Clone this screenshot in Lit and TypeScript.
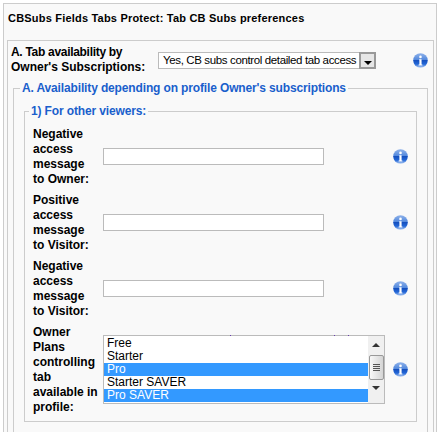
import { LitElement, html, css, svg } from 'lit';
import { customElement } from 'lit/decorators.js';

interface Row {
  label: string[];
}

const textRows: Row[] = [
  { label: ['Negative', 'access', 'message', 'to Owner:'] },
  { label: ['Positive', 'access', 'message', 'to Visitor:'] },
  { label: ['Negative', 'access', 'message', 'to Visitor:'] },
];

const plans = [
  { name: 'Free', on: false },
  { name: 'Starter', on: false },
  { name: 'Pro', on: true },
  { name: 'Starter SAVER', on: false },
  { name: 'Pro SAVER', on: true },
];

const infoIcon = svg`
  <svg class="info" width="15" height="15" viewBox="0 0 15 15">
    <defs>
      <linearGradient id="ball" x1="0" y1="0" x2="0" y2="1">
        <stop offset="0" stop-color="#8fb2ea" />
        <stop offset="0.48" stop-color="#4f86dc" />
        <stop offset="0.5" stop-color="#1550bf" />
        <stop offset="0.75" stop-color="#2468d8" />
        <stop offset="1" stop-color="#b4cdf2" />
      </linearGradient>
    </defs>
    <circle cx="7.5" cy="7.5" r="7.3" fill="url(#ball)" />
    <circle cx="7.5" cy="3.9" r="1.3" fill="#fff" />
    <path d="M6.2 6.3h2.4v5.3h.8v1H5.6v-1h.8V7.3h-.2z" fill="#fff" />
  </svg>
`;

@customElement('app-root')
export class AppRoot extends LitElement {
  static styles = css`
    :host {
      display: block;
      width: 444px;
      height: 432px;
      overflow: hidden;
      background: #fff;
      font-family: 'Liberation Sans', Arial, sans-serif;
      font-size: 12px;
      line-height: 15px;
      color: #000;
    }

    .panel {
      margin: 3px 7px 0 3px;
      height: 440px;
      box-sizing: border-box;
      border: 1px solid #ccc;
      background: #f9f9f9;
      padding: 0 2px 0 3px;
    }

    h3 {
      margin: 0;
      height: 36px;
      padding: 7px 0 0 1px;
      box-sizing: border-box;
      font-size: 11px;
      line-height: 15px;
      font-weight: bold;
      letter-spacing: 0.2px;
    }

    .box {
      border: 1px solid #ccc;
      height: 440px;
      box-sizing: border-box;
      padding: 3px 5px 0 3px;
    }

    .top-row {
      display: flex;
      align-items: center;
      height: 32px;
      margin-bottom: 5px;
    }

    .top-label {
      width: 147px;
      flex: none;
      font-weight: bold;
    }

    .tight {
      letter-spacing: -0.3px;
    }

    .fake-select {
      width: 219px;
      height: 17px;
      box-sizing: border-box;
      border: 1px solid #bbb;
      background: #fff;
      display: flex;
      align-items: center;
      justify-content: space-between;
      padding-left: 4px;
      font-size: 11.5px;
      letter-spacing: -0.37px;
      white-space: nowrap;
    }

    .drop {
      width: 17px;
      height: 17px;
      margin: -1px -1px -1px 0;
      box-sizing: border-box;
      border: 2px solid #999;
      background: #e6e6e6;
      display: flex;
      align-items: flex-end;
      justify-content: center;
      padding-bottom: 2px;
    }

    .drop i {
      border: 4px solid transparent;
      border-top-color: #000;
      border-bottom-width: 0;
    }

    .top-row .info {
      margin-left: 37px;
    }

    fieldset {
      margin: 0;
      padding: 0;
      border: 1px solid #ccc;
      min-width: 0;
      box-sizing: border-box;
    }

    legend {
      margin-left: -4px;
      padding: 0 2px;
      color: #1a5fcc;
      font-weight: bold;
      letter-spacing: -0.14px;
    }

    .outer {
      margin-left: 2px;
      height: 400px;
      padding: 8px 10px 0 10px;
    }

    .inner {
      height: 318px;
      padding: 8px 0 0 8px;
    }

    .row {
      display: grid;
      grid-template-columns: 70px 221px 1fr;
      align-items: center;
      margin-bottom: 6px;
    }

    .row .label {
      font-weight: bold;
    }

    .text-input,
    .listbox,
    .row .info {
      margin-bottom: 2px;
    }

    .text-input {
      width: 221px;
      height: 17px;
      box-sizing: border-box;
      border: 1px solid #bbb;
      background: #fff;
    }

    .row .info {
      margin-left: 69px;
    }

    .list-row {
      grid-template-columns: 70px 282px 1fr;
    }

    .list-row .info {
      margin-left: 8px;
    }

    .listbox {
      position: relative;
      height: 69px;
      width: 282px;
      box-sizing: border-box;
      border: 1px solid #bbb;
      background: #fff;
      display: flex;
      line-height: 13px;
    }

    .speck {
      position: absolute;
      top: -1px;
      width: 1px;
      height: 1px;
      background: #6a3fb0;
    }

    .options {
      flex: 1;
      padding-top: 1px;
    }

    .options div {
      padding-left: 3px;
    }

    .options .on {
      background: #3399ff;
      color: #fff;
    }

    .scroll {
      width: 16px;
      background: #f0f0f0;
      display: flex;
      flex-direction: column;
      align-items: center;
      padding: 7px 0 0;
      box-sizing: border-box;
    }

    .up,
    .down {
      border: 4px solid transparent;
    }

    .up {
      border-bottom-color: #333;
      border-top-width: 0;
    }

    .down {
      margin-top: 6px;
      border-top-color: #333;
      border-bottom-width: 0;
    }

    .thumb {
      margin-top: 8px;
      width: 15px;
      height: 25px;
      box-sizing: border-box;
      border: 1px solid #999;
      border-radius: 2px;
      background: linear-gradient(90deg, #f8f8f8, #d4d4d4);
      display: flex;
      flex-direction: column;
      justify-content: center;
      gap: 1px;
      padding: 0 3px;
    }

    .thumb b {
      height: 1px;
      background: #555;
    }
  `;

  render() {
    return html`
      <div class="panel">
        <h3>CBSubs Fields Tabs Protect: Tab CB Subs preferences</h3>
        <div class="box">
          <div class="top-row">
            <div class="top-label"><span class="tight">A. Tab availability by</span><br />Owner's Subscriptions:</div>
            <div class="fake-select">
              <span>Yes, CB subs control detailed tab access</span>
              <span class="drop"><i></i></span>
            </div>
            ${infoIcon}
          </div>
          <fieldset class="outer">
            <legend>A. Availability depending on profile Owner's subscriptions</legend>
            <fieldset class="inner">
              <legend>1) For other viewers:</legend>
              ${textRows.map(
                (r) => html`
                  <div class="row">
                    <div class="label">${r.label.map((l) => html`${l}<br />`)}</div>
                    <div class="text-input"></div>
                    ${infoIcon}
                  </div>
                `
              )}
              <div class="row list-row">
                <div class="label">Owner<br />Plans<br />controlling<br />tab<br />available in<br />profile:</div>
                <div class="listbox">
                  <i class="speck" style="left:126px"></i>
                  <i class="speck" style="left:230px"></i>
                  <i class="speck" style="left:244px"></i>
                  <div class="options">
                    ${plans.map((p) => html`<div class=${p.on ? 'on' : ''}>${p.name}</div>`)}
                  </div>
                  <div class="scroll">
                    <span class="up"></span>
                    <span class="thumb"><b></b><b></b><b></b><b></b></span>
                    <span class="down"></span>
                  </div>
                </div>
                ${infoIcon}
              </div>
            </fieldset>
          </fieldset>
        </div>
      </div>
    `;
  }
}
